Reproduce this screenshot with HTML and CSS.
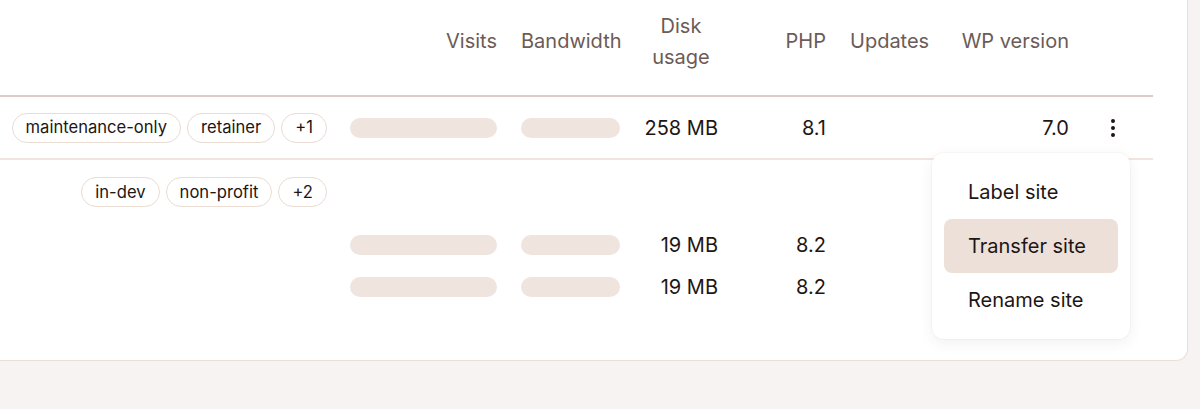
FILE: index.html
```html
<!DOCTYPE html>
<html lang="en">
<head>
<meta charset="utf-8">
<title>Sites</title>
<link rel="stylesheet" href="styles.css">
</head>
<body>
<div class="card">
  <div class="table">
    <div class="row head">
      <div class="cell"></div>
      <div class="cell num">Visits</div>
      <div class="cell num">Bandwidth</div>
      <div class="cell center">Disk usage</div>
      <div class="cell num">PHP</div>
      <div class="cell num">Updates</div>
      <div class="cell num">WP version</div>
      <div class="cell"></div>
    </div>
    <div class="row site sep">
      <div class="cell labels">
        <span class="pill">maintenance-only</span>
        <span class="pill">retainer</span>
        <span class="pill">+1</span>
      </div>
      <div class="cell"><div class="bar"></div></div>
      <div class="cell"><div class="bar"></div></div>
      <div class="cell num">258 MB</div>
      <div class="cell num">8.1</div>
      <div class="cell num"></div>
      <div class="cell num">7.0</div>
      <div class="cell actions">
        <svg class="kebab" width="24" height="24" viewBox="0 0 24 24" aria-hidden="true">
          <circle cx="12" cy="5" r="2"/>
          <circle cx="12" cy="12" r="2"/>
          <circle cx="12" cy="19" r="2"/>
        </svg>
      </div>
    </div>
    <div class="row group">
      <div class="cell labels">
        <span class="pill">in-dev</span>
        <span class="pill">non-profit</span>
        <span class="pill">+2</span>
      </div>
    </div>
    <div class="row sub">
      <div class="cell"></div>
      <div class="cell"><div class="bar"></div></div>
      <div class="cell"><div class="bar"></div></div>
      <div class="cell num">19 MB</div>
      <div class="cell num">8.2</div>
      <div class="cell"></div>
      <div class="cell"></div>
      <div class="cell"></div>
    </div>
    <div class="row sub">
      <div class="cell"></div>
      <div class="cell"><div class="bar"></div></div>
      <div class="cell"><div class="bar"></div></div>
      <div class="cell num">19 MB</div>
      <div class="cell num">8.2</div>
      <div class="cell"></div>
      <div class="cell"></div>
      <div class="cell"></div>
    </div>
  </div>
  <ul class="menu">
    <li class="item">Label site</li>
    <li class="item active">Transfer site</li>
    <li class="item">Rename site</li>
  </ul>
</div>
</body>
</html>
```
FILE: styles.css
```css
* { box-sizing: border-box; }
html, body {
  margin: 0;
  padding: 0;
}
body {
  background: #f7f3f2;
  font-family: Inter, "Noto Sans", sans-serif;
  color: #1e1614;
  width: 1200px;
  height: 409px;
  overflow: hidden;
}
.card {
  position: relative;
  width: 1188px;
  height: 361px;
  background: #ffffff;
  border-right: 1px solid #eaded8;
  border-bottom: 1px solid #eaded8;
  border-bottom-right-radius: 12px;
}
.table {
  width: 1153px;
}
.row {
  display: grid;
  grid-template-columns: 338px 171px 123px 98px 108px 102px 141px 72px;
  align-items: center;
}
.cell {
  padding: 0 12px;
  font-size: 20px;
  line-height: 30px;
}
.num { text-align: right; }
.center { text-align: center; }
.head {
  height: 97px;
  padding-bottom: 12px;
  border-bottom: 2px solid #dccbc6;
  color: #6c5b56;
}
.head .cell { line-height: 31px; }
.site { height: 63px; }
.sep { border-bottom: 2px solid #f1e6df; }
.group { height: 64px; }
.sub { height: 42px; }
.labels {
  display: flex;
  justify-content: flex-end;
  gap: 6px;
  padding-left: 0;
  padding-right: 11px;
}
.pill {
  display: inline-flex;
  flex-shrink: 0;
  white-space: nowrap;
  align-items: center;
  height: 30px;
  padding: 0 13px;
  border: 1px solid #eadbd3;
  border-radius: 15px;
  font-size: 16.6px;
  line-height: 1;
  color: #1e1614;
  background: #fff;
}
.bar {
  height: 20px;
  border-radius: 10px;
  background: #efe4de;
}
.actions {
  padding-left: 20px;
  display: flex;
  align-items: center;
}
.kebab { fill: #1e1614; display: block; }
.menu {
  position: absolute;
  left: 932px;
  top: 153px;
  width: 198px;
  margin: 0;
  padding: 12px;
  list-style: none;
  background: #ffffff;
  border-radius: 12px;
  box-shadow: 0 0 0 1px rgba(120, 90, 80, 0.04), 0 4px 14px rgba(90, 60, 50, 0.07);
}
.item {
  height: 54px;
  padding-left: 24px;
  display: flex;
  align-items: center;
  font-size: 20px;
  border-radius: 8px;
  color: #1e1614;
}
.item.active { background: #ede0d9; }
```
